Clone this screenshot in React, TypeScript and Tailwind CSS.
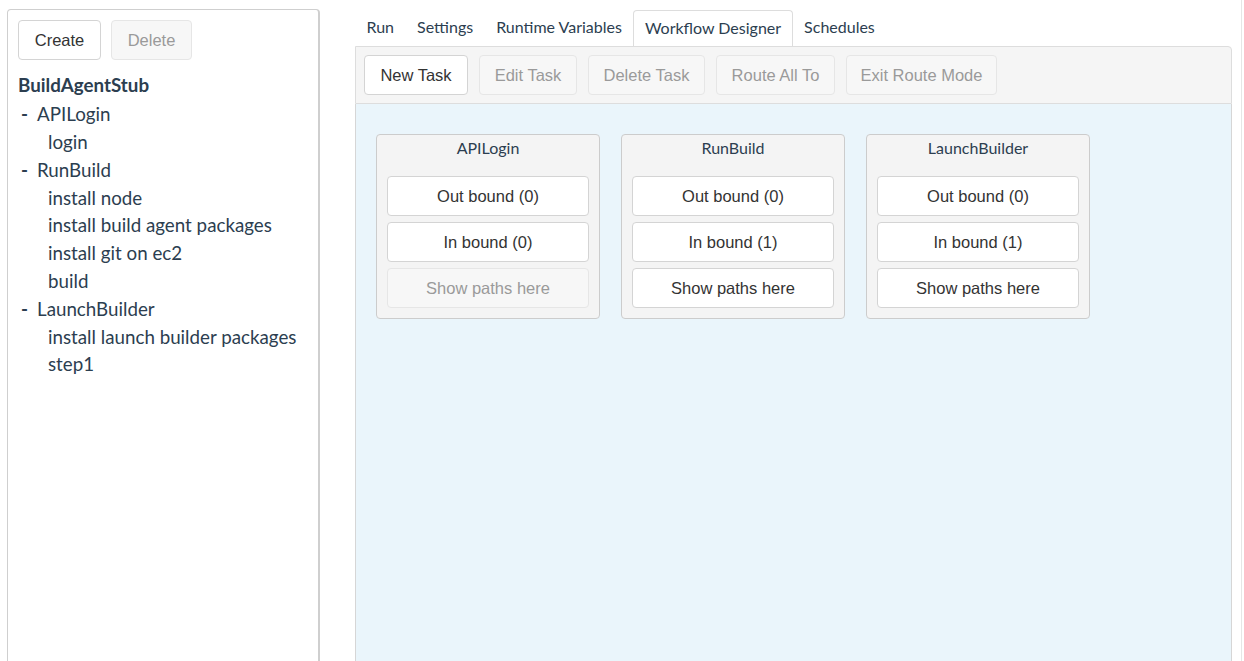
const tree = [
  { name: "APILogin", steps: ["login"] },
  { name: "RunBuild", steps: ["install node", "install build agent packages", "install git on ec2", "build"] },
  { name: "LaunchBuilder", steps: ["install launch builder packages", "step1"] },
];

const cards = [
  { name: "APILogin", out: 0, inb: 0, paths: false },
  { name: "RunBuild", out: 0, inb: 1, paths: true },
  { name: "LaunchBuilder", out: 0, inb: 1, paths: true },
];

const tabs = ["Run", "Settings", "Runtime Variables", "Workflow Designer", "Schedules"];

function Btn({ children, disabled, className = "" }: { children: React.ReactNode; disabled?: boolean; className?: string }) {
  return (
    <button
      disabled={disabled}
      className={
        "h-10 whitespace-nowrap rounded border text-[16.5px] font-['Liberation_Sans',Arial,sans-serif] " +
        (disabled ? "border-[#e6e6e6] bg-[#f7f7f7] text-[#9a9a9a]" : "border-[#d4d4d4] bg-white text-[#333]") +
        " " +
        className
      }
    >
      {children}
    </button>
  );
}

export default function App() {
  return (
    <div className="flex h-[661px] overflow-hidden bg-white font-['Lato','Noto_Sans',sans-serif] text-[#2c3e50]">
      <aside className="ml-[7px] mt-[9px] h-[700px] w-[313px] shrink-0 rounded-t border border-r-2 border-[#cfcfcf] px-[10px] pt-[10px]">
        <div className="flex gap-[10px]">
          <Btn className="w-[83px]">Create</Btn>
          <Btn disabled className="w-[81px]">Delete</Btn>
        </div>
        <div className="mt-[11px] text-[18.75px] leading-[27.8px]">
          <div className="mb-[1.5px] font-bold">BuildAgentStub</div>
          {tree.map((t) => (
            <div key={t.name}>
              <div className="flex">
                <span className="ml-[3px] w-[16px] font-bold">-</span>
                <span>{t.name}</span>
              </div>
              {t.steps.map((s) => (
                <div key={s} className="pl-[30px]">
                  {s}
                </div>
              ))}
            </div>
          ))}
        </div>
      </aside>

      <main className="ml-[35px] mt-[10px] flex w-[877px] shrink-0 flex-col">
        <nav className="flex h-[36px] items-stretch text-base">
          {tabs.map((t) => (
            <div
              key={t}
              className={
                "flex items-center rounded-t px-[10.5px] pb-[2px] " +
                (t === "Workflow Designer" ? "-mb-px border border-b-0 border-[#dddddd] bg-white" : "border border-transparent")
              }
            >
              {t}
            </div>
          ))}
        </nav>
        <div className="flex gap-[11px] rounded-tr border border-[#dddddd] bg-[#f5f5f5] px-[8px] py-[8px]">
          <Btn className="w-[104px]">New Task</Btn>
          <Btn disabled className="w-[98px]">Edit Task</Btn>
          <Btn disabled className="w-[117px]">Delete Task</Btn>
          <Btn disabled className="w-[119px]">Route All To</Btn>
          <Btn disabled className="w-[151px]">Exit Route Mode</Btn>
        </div>
        <div className="flex flex-1 items-start gap-[21px] border-x border-[#d6d6d6] bg-[#eaf5fb] px-[20px] pt-[30px]">
          {cards.map((c) => (
            <div key={c.name} className="w-[224px] rounded border border-[#cccccc] bg-[#f4f4f4] px-[10px] pb-[10px]">
              <div className="flex h-[41px] items-start justify-center pt-px text-base">{c.name}</div>
              <div className="flex flex-col gap-[6px]">
                <Btn className="w-full">Out bound ({c.out})</Btn>
                <Btn className="w-full">In bound ({c.inb})</Btn>
                <Btn disabled={!c.paths} className="w-full">
                  Show paths here
                </Btn>
              </div>
            </div>
          ))}
        </div>
      </main>

      <div className="ml-[9px] h-full w-px bg-[#e6e6e6]" />
    </div>
  );
}
